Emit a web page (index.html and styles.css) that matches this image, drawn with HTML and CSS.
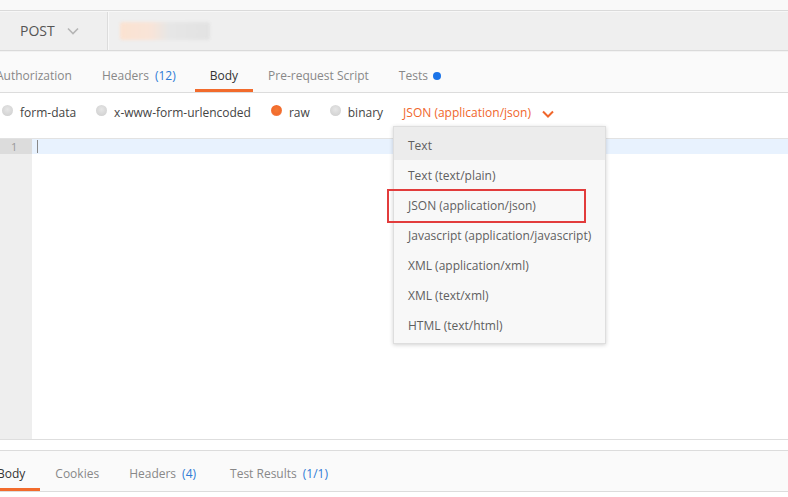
FILE: index.html
```html
<!DOCTYPE html>
<html>
<head>
<meta charset="utf-8">
<link rel="stylesheet" href="styles.css">
</head>
<body>
<div class="page">
  <div class="topstrip"></div>
  <div class="urlbar">
    <div class="method">
      <span class="method-label">POST</span>
      <svg class="chev" width="12" height="8" viewBox="0 0 12 8"><path d="M1 1.5 L6 6.5 L11 1.5" fill="none" stroke="#b5b5b5" stroke-width="1.6"/></svg>
    </div>
    <div class="url-blur"></div>
  </div>
  <div class="tabs">
    <div class="tab first">Authorization</div>
    <div class="tab">Headers <span class="count">(12)</span></div>
    <div class="tab active wide">Body</div>
    <div class="tab">Pre-request Script</div>
    <div class="tab">Tests <span class="dot"></span></div>
  </div>
  <div class="modes">
    <label class="mode first"><span class="radio"></span>form-data</label>
    <label class="mode"><span class="radio"></span>x-www-form-urlencoded</label>
    <label class="mode"><span class="radio on"></span>raw</label>
    <label class="mode"><span class="radio"></span>binary</label>
    <div class="type">JSON (application/json)
      <svg class="type-chev" width="12" height="8" viewBox="0 0 12 8"><path d="M1 1.5 L6 6.5 L11 1.5" fill="none" stroke="#f0662b" stroke-width="2"/></svg>
    </div>
  </div>
  <div class="editor">
    <div class="gutter"><div class="ln">1</div></div>
    <div class="code"><div class="line"><span class="cursor"></span></div></div>
  </div>
  <div class="spacer"></div>
  <div class="restabs">
    <div class="tab first active">Body</div>
    <div class="tab">Cookies</div>
    <div class="tab">Headers <span class="count">(4)</span></div>
    <div class="tab wide">Test Results <span class="count">(1/1)</span></div>
  </div>

  <div class="menu">
    <div class="item hl">Text</div>
    <div class="item">Text (text/plain)</div>
    <div class="item">JSON (application/json)</div>
    <div class="item">Javascript (application/javascript)</div>
    <div class="item">XML (application/xml)</div>
    <div class="item">XML (text/xml)</div>
    <div class="item">HTML (text/html)</div>
  </div>
  <div class="redbox"></div>
</div>
</body>
</html>
```
FILE: styles.css
```css
html, body {
  margin: 0;
  padding: 0;
  background: #ffffff;
}
body {
  font-family: "Open Sans", "Liberation Sans", sans-serif;
  font-size: 12px;
  color: #555;
  width: 788px;
  height: 497px;
  overflow: hidden;
}
.page {
  position: relative;
  width: 788px;
  height: 497px;
  overflow: hidden;
}
.topstrip {
  height: 10px;
  background: #f9f9f9;
  border-bottom: 1px solid #dadada;
}
.urlbar {
  height: 38px;
  background: #efefef;
  border-top: 1px solid #f7f7f7;
  border-bottom: 1px solid #dadada;
  display: flex;
  align-items: center;
}
.method {
  width: 87px;
  height: 38px;
  padding-left: 20px;
  display: flex;
  align-items: center;
  border-right: 1px solid #dcdcdc;
  box-shadow: 1px 0 0 #f8f8f8;
}
.method-label {
  font-size: 14px;
  color: #555;
  line-height: 20px;
}
.chev {
  margin-left: 12px;
}
.url-blur {
  margin-left: 12px;
  width: 90px;
  height: 18px;
  border-radius: 3px;
  background: linear-gradient(90deg, #fbe2d1 0%, #f8e4d8 35%, #e6e6e6 55%, #e2e2e2 100%);
  filter: blur(1.5px);
}
.tabs {
  height: 40px;
  background: #fafafa;
  border-top: 1px solid #f2f2f2;
  border-bottom: 1px solid #dcdcdc;
  display: flex;
}
.tab {
  padding: 16px 15px 0;
  line-height: 16px;
  height: 21px;
  color: #888;
  border-bottom: 3px solid transparent;
  white-space: nowrap;
  display: flex;
  align-items: flex-start;
}
.tab.first {
  margin-left: -19px;
}
.tab.wide {
  margin-left: 4px;
}
.tab.active {
  color: #333;
  border-bottom-color: #f26b2c;
}
.count {
  color: #2e7bd6;
  margin-left: 6px;
}
.dot {
  display: inline-block;
  width: 8px;
  height: 8px;
  border-radius: 50%;
  background: #1a73e8;
  margin-left: 5px;
  margin-top: 4px;
}
.modes {
  height: 45px;
  display: flex;
  align-items: flex-start;
  padding-top: 12px;
  box-sizing: border-box;
  line-height: 16px;
}
.mode {
  display: flex;
  align-items: flex-start;
  color: #444;
  margin-right: 20px;
  white-space: nowrap;
}
.mode.first {
  margin-left: 2px;
}
.radio {
  width: 11px;
  height: 11px;
  border-radius: 50%;
  background: radial-gradient(circle at 50% 40%, #e6e6e6 0%, #d4d4d4 70%, #c8c8c8 100%);
  margin-right: 7px;
  margin-top: 0;
}
.radio.on {
  background: radial-gradient(circle at 50% 45%, #f47a35 0%, #f26b2c 55%, #f5a27c 100%);
}
.type {
  color: #f0662b;
  display: flex;
  align-items: flex-start;
  white-space: nowrap;
}
.type-chev {
  margin-left: 11px;
  margin-top: 5px;
}
.editor {
  height: 300px;
  border-top: 1px solid #e2e2e2;
  border-bottom: 1px solid #dedede;
  display: flex;
}
.gutter {
  width: 32px;
  background: #eeeeee;
}
.ln {
  height: 15px;
  line-height: 15px;
  background: #dcdcdc;
  color: #999;
  font-size: 11px;
  padding-left: 11px;
}
.code {
  flex: 1;
}
.line {
  height: 15px;
  background: #e8f2fe;
  display: flex;
  align-items: center;
}
.cursor {
  width: 1px;
  height: 13px;
  background: #888;
  margin-left: 5px;
}
.spacer {
  height: 10px;
  border-bottom: 1px solid #dcdcdc;
}
.restabs {
  height: 40px;
  background: #fafafa;
  border-bottom: 1px solid #dcdcdc;
  display: flex;
}
.restabs .tab {
  padding-top: 15px;
  height: 22px;
}
.restabs .tab.first {
  margin-left: -18px;
  padding-right: 15px;
}
.menu {
  position: absolute;
  left: 393px;
  top: 126px;
  width: 211px;
  background: #f8f8f8;
  border: 1px solid #dedede;
  box-shadow: 0 1px 4px rgba(0, 0, 0, 0.18);
  padding-bottom: 3px;
}
.item {
  height: 30px;
  line-height: 32px;
  padding-left: 14px;
  color: #5f5f5f;
  white-space: nowrap;
  overflow: hidden;
}
.item.hl {
  background: #ececec;
  height: 33px;
  line-height: 38px;
}
.redbox {
  position: absolute;
  left: 387px;
  top: 189px;
  width: 195px;
  height: 30px;
  border: 2px solid #e23c3c;
}
```
